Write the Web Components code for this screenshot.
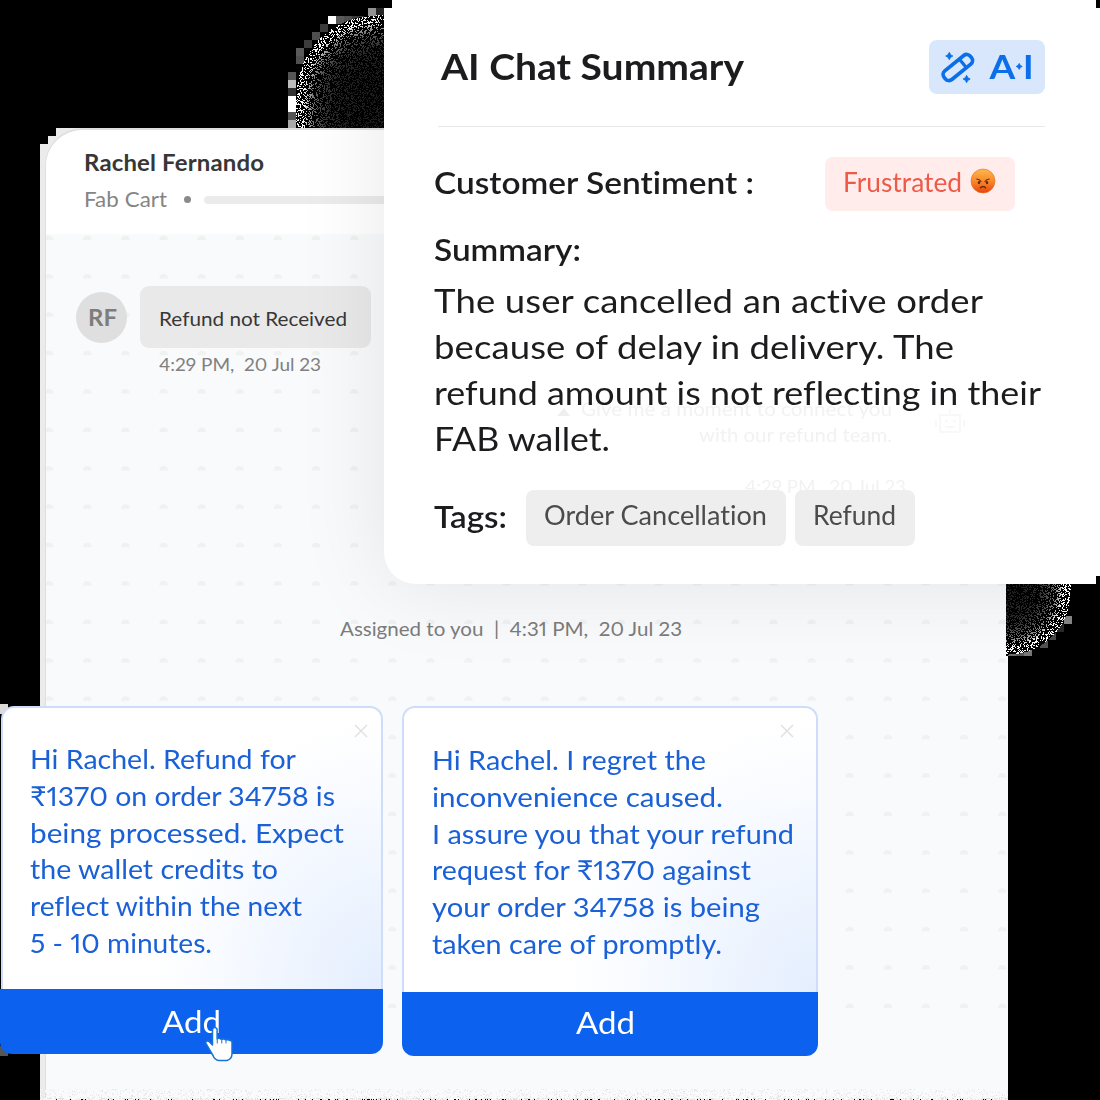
<!DOCTYPE html>
<html lang="en">
<head>
<meta charset="utf-8">
<title>AI Chat Summary</title>
<style>
html,body{margin:0;background:#000}
body{width:1100px;height:1100px;overflow:hidden;font-family:Lato,"Noto Sans","Liberation Sans",sans-serif}
</style>
</head>
<body>
<support-stage>
  <chat-window slot="window" name="Rachel Fernando" company="Fab Cart"></chat-window>
  <summary-panel slot="summary"></summary-panel>
  <reply-card slot="replies" style="--w:383px;--h:283px;--bh:65px;--pad:27px;--top:33px;--inset:1px;--shift:-2px" cursor close="15"
    lines="Hi Rachel. Refund for|266;₹1370 on order 34758 is|305;being processed. Expect|314;the wallet credits to|248;reflect within the next|272;5 - 10 minutes.|182"></reply-card>
  <reply-card slot="replies" style="--w:416px;--h:286px;--bh:64px;--pad:28px;--top:34px;--shift:-10px" close="24"
    lines="Hi Rachel. I regret the|274;inconvenience caused.|291;I assure you that your refund|362;request for ₹1370 against|319;your order 34758 is being|328;taken care of promptly.|290"></reply-card>
</support-stage>
<script>
const define = (name, html, init) => customElements.define(name, class extends HTMLElement {
  connectedCallback() {
    if (this.shadowRoot) return;
    const root = this.attachShadow({mode: 'open'});
    root.innerHTML = typeof html === 'function' ? html(this) : html;
    if (init) init(this, root);
  }
});

/* One line of text, widened and tracked so that it spans the given width. */
define('fit-line', `<style>:host{display:block;white-space:pre;flex:none}
span{display:inline-block;transform-origin:0 50%;font-variant-ligatures:none;font-feature-settings:"pnum","kern","liga" 0}</style><span></span>`, (el, root) => {
  const s = root.querySelector('span'), t = el.getAttribute('text');
  s.textContent = t;
  const target = +el.getAttribute('w'), w = s.getBoundingClientRect().width;
  if (!target || !w) return;
  const full = target + 1, k = Math.max(.94, Math.min(1.09, full / w));
  s.style.letterSpacing = ((full / k - w) / Math.max(1, t.length - 1)).toFixed(3) + 'px';
  s.style.transform = `scaleX(${k.toFixed(4)})`;
  el.style.width = target + 'px';
});

/* Speckled grain with a rounded outline. */
define('grain-patch', `<style>:host{display:block}canvas{display:block}</style><canvas></canvas>`, (el, root) => {
  const c = root.querySelector('canvas'), kind = el.getAttribute('kind');
  const W = c.width = +el.getAttribute('w'), H = c.height = +el.getAttribute('h');
  const g = c.getContext('2d');
  let seed = 7;
  const rnd = () => (seed = (seed * 16807) % 2147483647) / 2147483647;
  const px = (x, y, v, s = 1) => { g.fillStyle = `rgb(${v},${v},${v})`; g.fillRect(x, y, s, s); };
  if (kind === 'tl') {
    [[80,0,150],[88,0,40],[40,8,255],[48,8,90],[56,8,80],[64,8,60],[72,8,60],[32,16,60],[24,24,80],[16,32,60],[8,40,90],[8,48,80],[0,64,85],[0,72,190],[0,80,50],[0,88,255],[0,96,255],[0,104,85],[0,112,170]].forEach(b => px(b[0], b[1], b[2], 8));
  }
  if (kind === 'br') {
    g.fillStyle = '#000'; g.fillRect(0, 0, 2, H);
    [[58,32,130],[50,40,40],[42,48,70],[34,56,80],[18,64,120],[10,64,90],[2,64,110]].forEach(b => px(b[0], b[1], b[2], 8));
  }
  for (let y = 0; y < H; y++) for (let x = 0; x < W; x++) {
    if (kind === 'edge') {
      const r = rnd();
      if (y < H - 2) { if (r < .25) px(x, y, 225 + 30 * rnd() | 0); }
      else px(x, y, r < .16 && y === H - 1 ? 0 : r < .4 ? 225 : 250);
      continue;
    }
    let d;
    if (kind === 'tl') {
      const X = x - 8, Y = y - 7, R = 80;
      d = (X < R && Y < R) ? R - Math.hypot(R - X, R - Y) : Math.min(X, Y);
    } else {
      const X = 64 - x, Y = 70 - y, R = 62;
      d = (X < R && Y < R) ? R - Math.hypot(R - X, R - Y) : Math.min(X, Y);
    }
    if (d < 0) continue;
    const r = rnd();
    if (r < .34) px(x, y, Math.min(255, 30 + 480 * Math.exp(-d / 10)) | 0);
    else px(x, y, 0);
  }
});

define('support-stage', `<style>
:host{display:block;position:relative;width:1100px;height:1100px;background:#000;overflow:hidden}
.window{padding:128px 0 0 40px}
.layer{position:absolute}
.replies{display:flex;gap:19px;align-items:flex-start;left:0;top:706px}
.nick{width:8px;height:10px;background:#dcdad7}
</style>
<div class="layer" style="left:288px;top:8px"><grain-patch kind="tl" w="96" h="120"></grain-patch></div>
<div class="window"><slot name="window"></slot></div>
<div class="layer" style="left:40px;top:1089px"><grain-patch kind="edge" w="968" h="11"></grain-patch></div>
<div class="layer" style="left:384px;top:0"><slot name="summary"></slot></div>
<div class="layer" style="left:1006px;top:584px"><grain-patch kind="br" w="66" h="72"></grain-patch></div>
<div class="layer nick" style="left:0;top:704px"></div>
<div class="layer nick" style="left:0;top:1046px;background:#555"></div>
<div class="layer replies"><slot name="replies"></slot></div>`);

define('chat-window', el => `<style>
:host{display:block;box-sizing:border-box;width:968px;height:972px;padding-left:5px;background:#ebebeb;
 clip-path:polygon(0 16px,8px 16px,8px 8px,16px 8px,16px 0,100% 0,100% 100%,0 100%)}
.in{box-sizing:border-box;height:100%;border:solid #dfdfdf;border-width:2px 0 0 1px;border-top-left-radius:38px;overflow:hidden;background:#f8fafb}
header{height:104px;background:#fff;display:flex;flex-direction:column;padding-left:38px;box-sizing:border-box;padding-top:18px;gap:6px}
.sub{display:flex;align-items:center;height:30px}
.dot{width:7px;height:7px;border-radius:50%;background:#8a8a8a;margin:1px 13px 0 17px}
.bar{height:8px;width:420px;border-radius:4px;background:#ebebeb;margin-top:2px}
.body{height:866px;display:flex;flex-direction:column;position:relative}
svg.dots{position:absolute;left:0;top:0}
.msg{position:relative;display:flex;gap:13px;padding:52px 0 0 30px}
.av{width:51px;height:51px;border-radius:50%;background:#dfdfdf;display:flex;align-items:center;justify-content:center;margin-top:6px;color:#7d7d7d;font-weight:700;font-size:22px;line-height:26px}
.bub{width:231px;height:62px;border-radius:9px;background:#e9e9e9;display:flex;align-items:center;box-sizing:border-box;padding:2px 0 0 19px;color:#373737;font-size:19.3px}
.time{position:relative;margin:5px 0 0 113px;color:#808080;font-size:18px;line-height:22px}
.asg{position:relative;margin:242px 0 0 294px;color:#7c7c7c;font-size:19.5px;line-height:24px}
</style>
<div class="in"><header>
<fit-line text="${el.getAttribute('name')}" w="179" style="font-size:22px;line-height:30px;font-weight:700;color:#373737"></fit-line>
<div class="sub"><fit-line text="${el.getAttribute('company')}" w="82" style="font-size:20.5px;line-height:30px;color:#858585"></fit-line><span class="dot" style="margin-left:18px"></span><span class="bar"></span></div>
</header>
<div class="body"><svg class="dots" width="962" height="790"></svg>
<div class="msg"><div class="av"><fit-line text="RF" w="28"></fit-line></div><div class="bub"><fit-line text="Refund not Received" w="187"></fit-line></div></div>
<div class="time"><fit-line text="4:29 PM,  20 Jul 23" w="161"></fit-line></div>
<div class="asg"><fit-line text="Assigned to you  |  4:31 PM,  20 Jul 23" w="341"></fit-line></div>
</div></div>`, (el, root) => {
  let d = '';
  for (let r = 0; r < 21; r++) for (let c = 0; c < 26; c++) {
    const x = 3 + c * 38.12, y = 4 + r * 38.4;
    d += `M${(x - 4.2).toFixed(1)} ${(y + 2).toFixed(1)}q.4-4.200 3.600-4.500q3.400-.2 4.800 2v2.500z`;
  }
  root.querySelector('.dots').innerHTML = `<path d="${d}" fill="#f0f2f2"/>`;
});

define('ai-badge', `<style>:host{display:flex;width:116px;height:54px;border-radius:8px;background:#d9e7fd}svg{display:block}</style>
<svg width="116" height="54" viewBox="0 0 116 54"><g fill="none" stroke="#0a6fe8" stroke-width="3.7">
<g transform="translate(28.800 27.500) rotate(-39)"><rect x="-16.800" y="-5.600" width="33.600" height="11.200" rx="4.600"/><path d="M6.500-5.400V5.400" stroke-width="3.200"/></g></g>
<g fill="#0a6fe8" stroke="#0a6fe8" stroke-width=".8"><path d="M20.300 12.300q.8 3 3.600 3.700-2.800.8-3.600 3.700-.8-2.900-3.600-3.700 2.800-.7 3.600-3.700z"/><path d="M37.600 35.300q.8 3 3.600 3.700-2.800.8-3.600 3.700-.8-2.900-3.600-3.700 2.800-.7 3.600-3.700z"/><path d="M90.200 23.400q.7 2.400 3 3-2.300.7-3 3-.7-2.300-3-3 2.300-.6 3-3z"/></g>
<g font-family="Lato,sans-serif" font-size="32.500" font-weight="700" fill="#0a6fe8">
<text transform="translate(60.500 39) scale(1.140 1)">A</text>
<text transform="translate(94 39) scale(1.100 1)">I</text></g></svg>`);

define('angry-face', `<style>:host{display:block;width:26px;height:26px}svg{display:block}</style>
<svg width="26" height="26" viewBox="0 0 26 26"><defs><linearGradient id="g" x1="0" y1="0" x2="0" y2="1"><stop offset="0" stop-color="#fdb84e"/><stop offset=".5" stop-color="#f98a2b"/><stop offset="1" stop-color="#e8420d"/></linearGradient></defs>
<circle cx="13" cy="13" r="12" fill="url(#g)" stroke="#e2701e" stroke-width=".6"/>
<g stroke="#5c2508" fill="none" stroke-linecap="round"><path d="M6.800 11q3 .4 4.200 2.600M19.200 11q-3 .4-4.200 2.600" stroke-width="1.100"/><path d="M10.400 19.800q2.600-2.400 5.200 0" stroke-width="1.300"/></g>
<ellipse cx="9" cy="14.600" rx="1.200" ry="1.600" fill="#5c2508"/><ellipse cx="17" cy="14.600" rx="1.200" ry="1.600" fill="#5c2508"/></svg>`);

define('tag-chip', `<style>:host{display:flex;align-items:center;justify-content:flex-start;box-sizing:border-box;height:56px;padding:0 18px 6px;border-radius:8px;background:#eee;color:#4b4b4b;font-size:26px;line-height:30px}
:host([tone=red]){height:54px;padding:0 18px 4px;background:#ffeceb;color:#ee5a48;gap:8px}</style><slot></slot>`);

define('summary-panel', `<style>
:host{display:block;position:relative;box-sizing:border-box;width:716px;height:584px;padding:0 55px 0 50px;color:#1c1c1e}
.bg{position:absolute;inset:0;background:#fff;border-bottom-left-radius:32px;box-shadow:0 0 90px rgba(0,0,0,.095)}
.ghost{position:absolute;color:#f2f2f2;font-size:20px;line-height:26px;left:196px;top:395px;width:311px;display:flex;flex-direction:column;align-items:flex-end}
.col{position:relative;display:flex;flex-direction:column}
header{display:flex;align-items:center;justify-content:space-between;height:126px;box-sizing:border-box;padding:7px 0 0 7px}
hr{border:0;height:1px;background:#e8e8e8;margin:0 0 0 4px}
.row{display:flex;align-items:center}
.lab{font-size:31px;line-height:40px;font-weight:600}
.txt{font-size:33.5px;line-height:46px}
.blk{position:absolute;background:#000}
</style>
<div class="bg"></div>
<div class="blk" style="left:0;top:0;width:8px;height:8px"></div>
<div class="blk" style="left:712px;top:0;width:4px;height:8px"></div>
<div class="blk" style="left:712px;top:576px;width:4px;height:8px"></div>
<div class="ghost"><fit-line text="Give me a moment to connect you" w="310"></fit-line><fit-line text="with our refund team." w="192"></fit-line><fit-line text="4:29 PM,  20 Jul 23" w="160" style="margin-top:26px;margin-right:-14px;font-size:18px"></fit-line></div>
<svg style="position:absolute;left:170px;top:404px" width="430" height="40" fill="none" stroke="#f8f8f8" stroke-width="2"><path d="M3 12l7-8 6 8z" fill="#efefef" stroke="none"/><path d="M386 11h20v17h-20zM396 11V5M391 17h3M399 17h3M391 23h10M382 16v7M410 16v7"/></svg>
<div class="col">
<header><fit-line text="AI Chat Summary" w="302" style="font-size:36px;line-height:42px;font-weight:700;margin-top:-1px"></fit-line><ai-badge></ai-badge></header>
<hr>
<div class="row" style="margin-top:30px;height:54px"><fit-line class="lab" text="Customer Sentiment :" w="319" style="padding-bottom:5px"></fit-line><tag-chip tone="red" style="margin-left:72px;width:190px"><fit-line text="Frustrated" w="118"></fit-line><angry-face style="margin:-2px 0 0 1px"></angry-face></tag-chip></div>
<fit-line class="lab" text="Summary:" w="146" style="margin-top:18px"></fit-line>
<div class="txt" style="margin-top:8px"><fit-line text="The user cancelled an active order" w="548"></fit-line><fit-line text="because of delay in delivery. The" w="519"></fit-line><fit-line text="refund amount is not reflecting in their" w="606"></fit-line><fit-line text="FAB wallet." w="175"></fit-line></div>
<div class="row" style="margin-top:29px"><fit-line class="lab" text="Tags:" w="72" style="padding-bottom:5px"></fit-line><tag-chip style="margin-left:20px;width:260px"><fit-line text="Order Cancellation" w="222"></fit-line></tag-chip><tag-chip style="margin-left:9px;width:120px"><fit-line text="Refund" w="82"></fit-line></tag-chip></div>
</div>`);

define('hand-cursor', `<style>:host{display:block;width:30px;height:38px}svg{display:block}</style>
<svg width="30" height="38" viewBox="0 0 30 38"><path d="M7.500 4q2.300-3.200 4.600 0V14q2-1.600 4.200.5 2.300-1.500 4.500.5 3-1.200 6.200 1.500V29q-.2 5-5 6.500H13.500Q9.500 34.500 8 30.500L.9 18.500q-.6-3 2.800-2.300L7.500 20z" fill="#fff" stroke="#1673d6" stroke-width="1.500" stroke-linejoin="round"/><path d="M12.300 13.500v5M16.700 14.500v4M21 15v3.500" stroke="#3e8fe4" stroke-width="1.200" fill="none"/></svg>`);

define('reply-card', el => `<style>
:host{display:block;position:relative;width:var(--w)}
.top{box-sizing:border-box;height:var(--h);margin-left:var(--inset,0);border:2px solid #cdddfa;border-bottom:0;border-radius:13px 13px 0 0;padding:var(--top,32px) 0 0 var(--pad);color:#1a60d6;font-size:27.5px;line-height:36.8px;
background:radial-gradient(ellipse 60% 95% at 100% 100%,#e4eefe 0%,#f2f7ff 50%,#fff 100%)}
.btn{height:var(--bh);background:#0c62ee;border-radius:0 0 12px 12px;color:#fff;font-size:31.5px;line-height:38px;display:flex;align-items:center;justify-content:center;box-sizing:border-box;padding-right:calc(0px - var(--shift,0px))}
.x{position:absolute;top:18px}
hand-cursor{position:absolute;left:205px;top:319px}
</style>
<div class="top">${el.getAttribute('lines').split(';').map(l => { const [t, w] = l.split('|'); return `<fit-line text="${t}" w="${w - 1}"></fit-line>`; }).join('')}</div>
<svg class="x" style="right:${el.getAttribute('close')}px" width="14" height="14" stroke="#e0e1e3" stroke-width="1.500"><path d="M1 1l12 12M13 1L1 13"/></svg>
<div class="btn"><fit-line text="Add" w="58" style="margin-top:${el.hasAttribute('cursor') ? -2 : -5}px"></fit-line></div>
${el.hasAttribute('cursor') ? '<hand-cursor></hand-cursor>' : ''}`);
</script>
</body>
</html>
